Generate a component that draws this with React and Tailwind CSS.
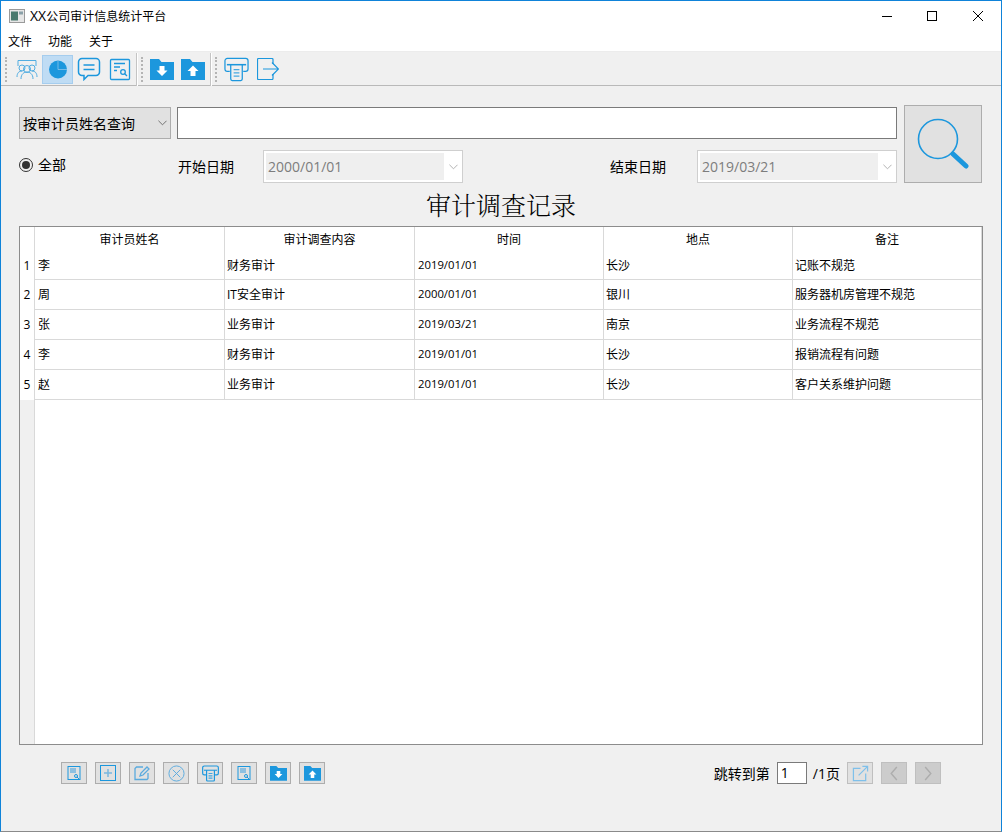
// App.jsx - audit statistics window
const FONT = "font-['Open_Sans','Noto_Sans_CJK_SC',sans-serif]";
const BLUE = '#1c97dd';

const columns = ['审计员姓名', '审计调查内容', '时间', '地点', '备注'];
const colWidths = ['w-[190px]', 'w-[190px]', 'w-[189px]', 'w-[189px]', 'w-[189px]'];
const records = [
  ['李', '财务审计', '2019/01/01', '长沙', '记账不规范'],
  ['周', 'IT安全审计', '2000/01/01', '银川', '服务器机房管理不规范'],
  ['张', '业务审计', '2019/03/21', '南京', '业务流程不规范'],
  ['李', '财务审计', '2019/01/01', '长沙', '报销流程有问题'],
  ['赵', '业务审计', '2019/01/01', '长沙', '客户关系维护问题'],
];

// toolbar / button icons
const Users = () => (
  <svg viewBox="0 0 24 24" className="w-6 h-6" fill="none" stroke={BLUE} strokeWidth="1" opacity="0.75">
    <path d="M3 9V3.500h18V9" />
    <circle cx="7" cy="11" r="3" /><circle cx="17" cy="11" r="3" /><circle cx="12" cy="12" r="3.500" />
    <path d="M2 20c0-4 2-6 5-6M22 20c0-4-2-6-5-6M6 22c0-5 3-7 6-7s6 2 6 7" />
  </svg>
);
const Pie = () => (
  <svg viewBox="0 0 24 24" className="w-6 h-6">
    <circle cx="12" cy="12.500" r="9" fill={BLUE} />
    <path d="M12 3.500v9h9" fill="none" stroke="#8cc4ea" strokeWidth="0.800" />
  </svg>
);
const Chat = () => (
  <svg viewBox="0 0 24 24" className="w-6 h-6" fill="none" stroke={BLUE} strokeWidth="1.500">
    <path d="M5 1.500h14A3.500 3.500 0 0 1 22.500 5v10a3.500 3.500 0 0 1-3.500 3.500h-8l-4 4v-4H5A3.500 3.500 0 0 1 1.500 15V5A3.500 3.500 0 0 1 5 1.500z" />
    <path d="M6.500 8h11M6.500 12.500h11" />
  </svg>
);
const Report = () => (
  <svg viewBox="0 0 24 24" className="w-6 h-6" fill="none" stroke={BLUE} strokeWidth="1.300">
    <rect x="2.500" y="2.500" width="19" height="20" rx="1" />
    <path d="M6 6.500h11M6 10h6M6 13.500h3" />
    <circle cx="15" cy="15" r="2.300" /><path d="M16.700 16.700l2.300 2.300" />
  </svg>
);
const FolderDown = ({ small }) => (
  <svg viewBox="0 0 24 22" className={small ? 'w-[17px] h-[16px]' : 'w-6 h-[22px]'}>
    <path fill={BLUE} d="M0 1h9l2.500 3H24v18H0z" />
    <path fill="#fff" d="M9.500 8h5v4.500h3l-5.500 5.500-5.500-5.500h3z" />
  </svg>
);
const FolderUp = ({ small }) => (
  <svg viewBox="0 0 24 22" className={small ? 'w-[17px] h-[16px]' : 'w-6 h-[22px]'}>
    <path fill={BLUE} d="M0 1h9l2.500 3H24v18H0z" />
    <path fill="#fff" d="M12 7.500l5.500 5.500h-3v5h-5v-5h-3z" />
  </svg>
);
const Printer = ({ small }) => (
  <svg viewBox="0 0 26 26" className={small ? 'w-[17px] h-[17px]' : 'w-[25px] h-[25px]'} fill="none" stroke={BLUE} strokeWidth={small ? 1.800 : 1.300}>
    <path d="M6 15H3.500A2.500 2.500 0 0 1 1 12.500V4a2.500 2.500 0 0 1 2.500-2.500h19A2.500 2.500 0 0 1 25 4v8.500a2.500 2.500 0 0 1-2.500 2.500H20" />
    <path d="M3 8h20" strokeWidth="1.600" />
    <path d="M7 8v15a1.500 1.500 0 0 0 1.500 1.500h9a1.500 1.500 0 0 0 1.500-1.500V8" />
    <path d="M10 13h6M10 16.500h6M10 20h6" opacity="0.8" />
  </svg>
);
const Exit = () => (
  <svg viewBox="0 0 22 22" className="w-[22px] h-[22px]" fill="none" stroke={BLUE} strokeWidth="1.200">
    <path d="M16 6V1.500a1 1 0 0 0-1-1H1.500a1 1 0 0 0-1 1v19a1 1 0 0 0 1 1H15a1 1 0 0 0 1-1V16" />
    <path d="M6 11h15M15 4.500l6.500 6.500-6.500 6.500" />
  </svg>
);
const Search = () => (
  <svg viewBox="0 0 52 52" className="w-[52px] h-[52px]" fill="none" stroke={BLUE}>
    <circle cx="21" cy="21" r="19.500" strokeWidth="1.600" />
    <path d="M36 36l13 12" strokeWidth="5" strokeLinecap="round" />
  </svg>
);
const Doc = () => (
  <svg viewBox="0 0 16 16" className="w-4 h-4" fill="none" stroke={BLUE}>
    <rect x="2" y="1.500" width="12" height="13" />
    <rect x="4" y="3" width="6" height="5" fill="#8dbfe0" stroke="none" />
    <circle cx="10" cy="11" r="1.500" /><path d="M11 12l2 2" />
  </svg>
);
const Plus = () => (
  <svg viewBox="0 0 16 16" className="w-4 h-4" fill="none" stroke={BLUE}>
    <rect x="0.500" y="0.500" width="15" height="15" />
    <path d="M8 4v8M4 8h8" stroke="#7ab7df" strokeWidth="1.500" />
  </svg>
);
const Edit = () => (
  <svg viewBox="0 0 16 16" className="w-4 h-4" fill="none" stroke="#5aaade" strokeWidth="1.300">
    <path d="M9 2H2.500L1 3.500v11h12l1-1V8" />
    <path d="M6 11l1-3 6-6 2 2-6 6z" />
  </svg>
);
const Cancel = () => (
  <svg viewBox="0 0 18 18" className="w-[17px] h-[17px]" fill="none" stroke="#5aaade">
    <circle cx="9" cy="9" r="8" /><path d="M5 5l8 8M13 5l-8 8" />
  </svg>
);
const Launch = () => (
  <svg viewBox="0 0 18 18" className="w-[17px] h-[17px]" fill="none" stroke="#7fc0ea" strokeWidth="1.300">
    <path d="M9 3.500H1.500v13h13V9" />
    <path d="M7 11l9-9M11 1.500h5.500V7" />
  </svg>
);

const Handle = ({ className = 'ml-[3px]' }) => (
  <div className={`w-[3px] h-[25px] border-l-2 border-dotted border-[#b4b4b4] ${className}`} />
);
const Sep = ({ className = 'ml-[1px]' }) => <div className={`w-[2px] h-[33px] bg-[#c4c4c4] shrink-0 border-r border-white ${className}`} />;
const ToolBtn = ({ children, active }) => (
  <div className={`w-[31px] h-[29px] flex items-center justify-center border ${active ? 'bg-[#bfdcf4] border-[#a5cdee]' : 'border-transparent'}`}>
    {children}
  </div>
);
const Chevron = ({ color = '#666' }) => (
  <svg viewBox="0 0 10 6" className="w-[9px] h-[6px]" fill="none" stroke={color}>
    <path d="M0.500 0.500L5 5l4.500-4.500" />
  </svg>
);
const DateBox = ({ value }) => (
  <div className="w-[200px] h-[33px] border border-[#cfcfcf] bg-white flex items-stretch">
    <div className="w-[178px] my-[2px] ml-[2px] bg-[#efefef] text-[#7d7d7d] text-[14px] leading-[27px] pl-[2px]">{value}</div>
    <div className="flex-1 flex items-center justify-center"><Chevron color="#aaa" /></div>
  </div>
);
const FootBtn = ({ children }) => (
  <div className="w-[26px] h-[22px] bg-[#e1e1e1] border border-[#adadad] flex items-center justify-center">{children}</div>
);
const NavBtn = ({ d }) => (
  <div className="w-[26px] h-[22px] bg-[#cccccc] border border-[#bfbfbf] flex items-center justify-center">
    <svg viewBox="0 0 10 16" className="w-[10px] h-[15px]" fill="none" stroke="#adadad" strokeWidth="1.500"><path d={d} /></svg>
  </div>
);

export default function App() {
  return (
    <div className={`w-[1002px] h-[832px] bg-[#f0f0f0] border border-[#0f83d9] border-b-[#8a8a8a] flex flex-col text-black overflow-hidden ${FONT}`}>
      {/* title bar */}
      <div className="h-[30px] bg-white flex items-center shrink-0">
        <svg viewBox="0 0 16 14" className="w-4 h-[14px] ml-[8px]">
          <rect x="0.500" y="0.500" width="15" height="13" fill="#e6e6e6" stroke="#9a9a9a" />
          <rect x="2" y="2.500" width="7" height="9" fill="#4a7a6e" />
          <rect x="10" y="2.500" width="4" height="3" fill="#8aa0a8" />
        </svg>
        <span className="ml-[5px] text-[12px] leading-none"><span className="text-[14px]">XX</span>公司审计信息统计平台</span>
        <div className="ml-auto flex items-center">
          <div className="w-[45px] flex justify-center"><div className="w-[10px] h-px bg-black" /></div>
          <div className="w-[46px] flex justify-center"><div className="w-[10px] h-[10px] border border-black" /></div>
          <div className="w-[46px] flex justify-center">
            <svg viewBox="0 0 10 10" className="w-[10px] h-[10px]" fill="none" stroke="#000"><path d="M0 0l10 10M10 0L0 10" /></svg>
          </div>
        </div>
      </div>
      {/* menu */}
      <div className="h-[21px] bg-white flex items-center text-[12px] pl-[8px] pt-px gap-[17px] shrink-0 mb-px border-b border-[#ececec]">
        <span className="-ml-px">文件</span><span className="-ml-px">功能</span><span>关于</span>
      </div>
      {/* toolbar */}
      <div className="h-[33px] bg-[#f0f0f0] border-b border-[#b9b9b9] flex items-center shrink-0">
        <Handle className="ml-[4px]" />
        <div className="flex ml-[3px] items-center">
          <ToolBtn><Users /></ToolBtn>
          <ToolBtn active><Pie /></ToolBtn>
          <ToolBtn><Chat /></ToolBtn>
          <ToolBtn><Report /></ToolBtn>
        </div>
        <Sep />
        <Handle />
        <div className="flex ml-[2px] items-center">
          <ToolBtn><FolderDown /></ToolBtn>
          <ToolBtn><FolderUp /></ToolBtn>
        </div>
        <Sep className="ml-[2px]" />
        <Handle />
        <div className="flex ml-[3px] items-center">
          <ToolBtn><Printer /></ToolBtn>
          <ToolBtn><Exit /></ToolBtn>
        </div>
      </div>

      {/* body */}
      <div className="flex-1 flex flex-col pl-[18px] pr-[18px] pt-[19px] min-h-0">
        <div className="flex gap-[7px] mr-[1px]">
          <div className="flex-1 min-w-0">
            <div className="flex gap-[6px] mt-[2px]">
              <div className="w-[152px] h-[32px] bg-[#e1e1e1] border border-[#adadad] flex items-center justify-between pl-[3px] pr-[3px]">
                <span className="text-[14px]">按审计员姓名查询</span>
                <Chevron />
              </div>
              <div className="flex-1 h-[32px] bg-white border border-[#7a7a7a]" />
            </div>
            <div className="flex items-center mt-[11px] h-[33px]">
              <div className="flex items-center mb-[4px]">
                <div className="w-[14px] h-[14px] rounded-full border border-[#333] flex items-center justify-center">
                  <div className="w-[8px] h-[8px] rounded-full bg-[#333]" />
                </div>
                <span className="ml-[5px] text-[14px] w-[140px]">全部</span>
              </div>
              <span className="text-[14px] w-[85px]">开始日期</span>
              <DateBox value="2000/01/01" />
              <span className="ml-[147px] text-[14px] w-[86px]">结束日期</span>
              <div className="ml-px"><DateBox value="2019/03/21" /></div>
            </div>
          </div>
          <div className="w-[78px] h-[78px] bg-[#e1e1e1] border border-[#adadad] flex items-center justify-center shrink-0">
            <Search />
          </div>
        </div>

        <div className="text-center text-[25px] leading-[43px] h-[43px] font-['Noto_Serif_CJK_SC','Noto_Sans_CJK_SC',serif] font-light">审计调查记录</div>

        {/* table */}
        <div className="h-[519px] bg-white border border-[#8c8c8c] flex shrink-0">
          <div className="w-[14px] bg-[#f0f0f0] shrink-0 flex flex-col">
            <div className="h-[25px] bg-white" />
            {records.map((r, i) => (
              <div key={i} className={`${i === 0 ? 'h-[28px]' : 'h-[30px]'} bg-white text-[12px] flex items-center justify-center`}>{i + 1}</div>
            ))}
          </div>
          <div className="flex-1 flex flex-col min-w-0 border-l border-[#d9d9d9]">
            <div className="flex h-[25px] shrink-0">
              {columns.map((c, i) => (
                <div key={c} className={`${colWidths[i]} text-center text-[12px] leading-[25px] border-r border-[#d9d9d9]`}>{c}</div>
              ))}
            </div>
            {records.map((r, i) => (
              <div key={i} className={`flex ${i === 0 ? 'h-[28px]' : 'h-[30px]'} border-b border-[#d9d9d9] shrink-0`}>
                {r.map((v, j) => (
                  <div key={j} className={`${colWidths[j]} ${j === 2 ? 'text-[11.3px]' : 'text-[12px]'} ${j === 0 || j === 2 ? 'pl-[3px]' : 'pl-[2px]'} flex items-center border-r border-[#d9d9d9]`}>{v}</div>
                ))}
              </div>
            ))}
          </div>
        </div>

        {/* footer */}
        <div className="flex items-center mt-[16px] h-[24px]">
          <div className="flex gap-[8px] ml-[42px]">
            <FootBtn><Doc /></FootBtn>
            <FootBtn><Plus /></FootBtn>
            <FootBtn><Edit /></FootBtn>
            <FootBtn><Cancel /></FootBtn>
            <FootBtn><Printer small /></FootBtn>
            <FootBtn><Doc /></FootBtn>
            <FootBtn><FolderDown small /></FootBtn>
            <FootBtn><FolderUp small /></FootBtn>
          </div>
          <div className="ml-auto flex items-center mr-[42px]">
            <span className="text-[14px]">跳转到第</span>
            <div className="ml-[7px] w-[30px] h-[22px] bg-white border border-[#7a7a7a] text-[14px] leading-[20px] pl-[3px]">1</div>
            <span className="ml-[6px] text-[14px]">/1页</span>
            <div className="ml-[7px] w-[26px] h-[22px] bg-[#e1e1e1] border border-[#bfbfbf] flex items-center justify-center"><Launch /></div>
            <div className="ml-[8px]"><NavBtn d="M8 1L2 8l6 7" /></div>
            <div className="ml-[8px]"><NavBtn d="M2 1l6 7-6 7" /></div>
          </div>
        </div>
      </div>
    </div>
  );
}
